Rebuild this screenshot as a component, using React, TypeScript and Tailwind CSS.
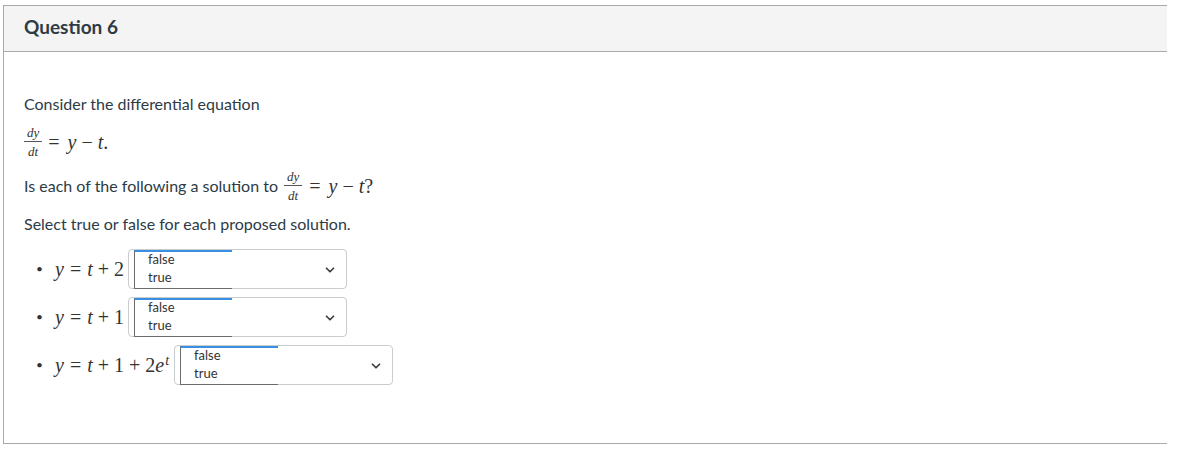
import React from 'react';
import { ChevronDown } from 'lucide-react';

const serif = { fontFamily: '"Liberation Serif", "DejaVu Serif", serif' };

const Frac = () => (
  <span className="inline-flex flex-col items-center align-middle leading-none text-[#333]" style={serif}>
    <span className="italic text-[13px] px-[3px] pb-[2px]">dy</span>
    <span className="h-px w-full bg-[#555]" />
    <span className="italic text-[13px] px-[3px] pt-[3px]">dt</span>
  </span>
);

const I = ({ children }: { children: React.ReactNode }) => <span className="italic">{children}</span>;
const Rel = ({ children }: { children: React.ReactNode }) => <span className="mx-[6px]">{children}</span>;
const Bin = ({ children }: { children: React.ReactNode }) => <span className="mx-[5px]">{children}</span>;

const Eq = ({ children }: { children: React.ReactNode }) => (
  <span className="text-[20px] text-[#333] whitespace-nowrap" style={serif}>
    {children}
  </span>
);

const Dropdown = () => (
  <div className="relative w-[219px] h-[40px] border border-[#c7cdd1] rounded-[4px] bg-white shrink-0">
    <div className="absolute left-[5px] top-0 w-[98px] h-[39px] bg-white border-t-[2px] border-t-[#3b8fe0] border-l border-l-[#6b6b6b] border-b border-b-[#6b6b6b] pl-[13px] text-[13px] text-[#333] leading-[18px]">
      <div className="-mt-[2px] flex flex-col">
        <span>false</span>
        <span>true</span>
      </div>
    </div>
    <ChevronDown size={14} strokeWidth={3} className="absolute right-[9px] top-[13px] text-[#3d3d3d]" />
  </div>
);

const Row = ({ children }: { children: React.ReactNode }) => (
  <li className="flex items-center">
    <span className="w-[31px] pl-[12px] text-[#333] text-[12px]">•</span>
    <Eq>{children}</Eq>
    <span className="w-[4px]" />
    <Dropdown />
  </li>
);

export default function App() {
  return (
    <div className="w-[1204px] h-[455px] bg-white pt-[5px] pl-[3px]" style={{ fontFamily: 'Lato, "Open Sans", sans-serif' }}>
      <div className="w-[1164px] h-[439px] border-l border-t border-b border-[#a9a9a9] flex flex-col">
        <div className="h-[46px] bg-[#f4f4f4] border-b border-[#a9a9a9] flex items-center pl-[20px]">
          <h2 className="text-[19px] font-bold text-[#2d3b45] -mt-[2px]">Question 6</h2>
        </div>
        <div className="pl-[20px] pt-[42px] text-[16px] text-[#2d3b45]">
          <p className="leading-[20px]">Consider the differential equation</p>
          <div className="mt-[12px] flex items-center h-[32px]">
            <Frac />
            <Eq>
              <span className="ml-[6px] mr-[8px]">=</span>
              <I>y</I>
              <Bin>−</Bin>
              <I>t</I>.
            </Eq>
          </div>
          <p className="mt-[12px] flex items-center h-[32px]">
            <span className="mr-[6px]">Is each of the following a solution to</span>
            <Frac />
            <Eq>
              <span className="ml-[7px] mr-[8px]">=</span>
              <I>y</I>
              <Bin>−</Bin>
              <I>t</I>?
            </Eq>
          </p>
          <p className="mt-[12px] leading-[20px]">Select true or false for each proposed solution.</p>
          <ul className="mt-[15px] flex flex-col gap-[8px]">
            <Row>
              <I>y</I>
              <Rel>=</Rel>
              <I>t</I>
              <Bin>+</Bin>2
            </Row>
            <Row>
              <I>y</I>
              <Rel>=</Rel>
              <I>t</I>
              <Bin>+</Bin>1
            </Row>
            <Row>
              <I>y</I>
              <Rel>=</Rel>
              <I>t</I>
              <Bin>+</Bin>1<Bin>+</Bin>2<I>e</I>
              <sup className="italic text-[14px] ml-[1px] mr-[1px]">t</sup>
            </Row>
          </ul>
        </div>
      </div>
    </div>
  );
}
